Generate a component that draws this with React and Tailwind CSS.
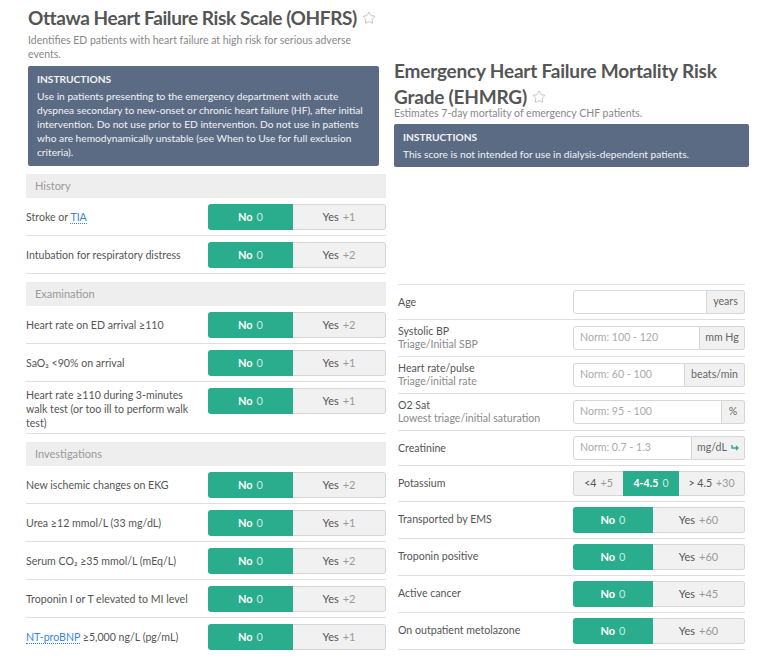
import React from "react";
import { Star } from "lucide-react";

const font = { fontFamily: "Lato, 'Noto Sans', sans-serif" };

function Toggle({ yes, w = "w-[178px]", noW = "w-[85px]", h = "h-[26px]" }) {
  return (
    <div className={`flex ${w} ${h} shrink-0 text-[11px]`}>
      <div className={`${noW} flex items-center justify-center gap-1 rounded-l-[3px] bg-[#29ad8c] text-white`}>
        <span className="font-bold">No</span>
        <span className="text-[#c8ece2]">0</span>
      </div>
      <div className="flex flex-1 items-center justify-center gap-1 rounded-r-[3px] border border-l-0 border-[#d6d6d6] bg-[#f1f1f1]">
        <span className="text-[#555]">Yes</span>
        <span className="text-[#999]">{yes}</span>
      </div>
    </div>
  );
}

function Section({ title }) {
  return (
    <div className="mt-2 flex h-6 items-center bg-[#eeeeee] px-[9px] text-[11px] text-[#9a9a9a]">
      {title}
    </div>
  );
}

function Row({ children, yes, top, last }) {
  let pad = "border-b border-[#dedede] pb-[5px]";
  if (last) pad = "pb-[4px]";
  if (top) pad = "border-b border-[#dedede] pb-[3px]";
  return (
    <div className={`flex justify-between pt-[6px] ${pad} ${top ? "items-start" : "items-center"}`}>
      <div className={`w-[174px] text-[10.6px] text-[#555] ${top ? "leading-[14px]" : "leading-[14.5px]"}`}>
        {children}
      </div>
      <Toggle yes={yes} />
    </div>
  );
}

function Abbr({ children }) {
  return (
    <span className="border-b border-dotted border-[#3a87d9] text-[#3a87d9]">{children}</span>
  );
}

function InputRow({ label, sub, placeholder, unit, unitW, icon }) {
  return (
    <div className="flex items-center justify-between border-b border-[#dedede] py-[5px]">
      <div className="text-[10.6px] leading-[13px] text-[#555]">
        <div>{label}</div>
        {sub && <div className="text-[#8a8a8a]">{sub}</div>}
      </div>
      <div className="flex h-6 w-[172px] text-[10.6px]">
        <div className="flex flex-1 items-center rounded-l-[3px] border border-[#d6d6d6] bg-white px-[6px] text-[#aaa]">
          {placeholder}
        </div>
        <div
          className={`${unitW} flex items-center justify-center gap-1 rounded-r-[3px] border border-l-0 border-[#d6d6d6] bg-[#f1f1f1] text-[#666]`}
        >
          {unit}
          {icon && (
            <svg width="8" height="8" viewBox="0 0 8 8" fill="none" stroke="#29ad8c" strokeWidth="1.4">
              <path d="M1 1v3h6M5 2l2 2-2 2" />
            </svg>
          )}
        </div>
      </div>
    </div>
  );
}

function ToggleRow({ label, yes }) {
  return (
    <div className="flex items-center justify-between border-b border-[#dedede] py-[5px]">
      <div className="text-[10.6px] text-[#555]">{label}</div>
      <Toggle yes={yes} w="w-[172px]" noW="w-[80px]" />
    </div>
  );
}

export default function App() {
  return (
    <div className="flex min-h-[670px] gap-2 bg-white pl-[26px]" style={font}>
      {/* OHFRS */}
      <div className="w-[360px] pb-1">
        <div className="px-[2px] pt-[5px]">
          <h1 className="flex items-center gap-[5px] whitespace-nowrap text-[19px] font-bold leading-[26px] tracking-[-0.4px] text-[#555]">
            Ottawa Heart Failure Risk Scale (OHFRS)
            <Star size={14} strokeWidth={1.2} className="text-[#aaa]" />
          </h1>
          <p className="mt-[2px] w-[340px] text-[10.5px] leading-[14px] text-[#888]">
            Identifies ED patients with heart failure at high risk for serious adverse events.
          </p>
          <div className="mt-[5px] w-[351px] rounded-[2px] bg-[#5b6b83] px-[9px] pb-[7px] pt-[6px] text-[10.2px] leading-[14px] text-[#f1f3f6]">
            <div className="font-bold">INSTRUCTIONS</div>
            <div className="mt-[3px]">
              Use in patients presenting to the emergency department with acute dyspnea secondary to
              new-onset or chronic heart failure (HF), after initial intervention. Do not use prior to
              ED intervention. Do not use in patients who are hemodynamically unstable (see When to Use
              for full exclusion criteria).
            </div>
          </div>
        </div>

        <Section title="History" />
        <Row yes="+1">
          Stroke or <Abbr>TIA</Abbr>
        </Row>
        <Row yes="+2">Intubation for respiratory distress</Row>

        <Section title="Examination" />
        <Row yes="+2">Heart rate on ED arrival ≥110</Row>
        <Row yes="+1">SaO₂ &lt;90% on arrival</Row>
        <Row yes="+1" top>
          Heart rate ≥110 during 3-minutes walk test (or too ill to perform walk test)
        </Row>

        <Section title="Investigations" />
        <Row yes="+2">New ischemic changes on EKG</Row>
        <Row yes="+1">Urea ≥12 mmol/L (33 mg/dL)</Row>
        <Row yes="+2">Serum CO₂ ≥35 mmol/L (mEq/L)</Row>
        <Row yes="+2">Troponin I or T elevated to MI level</Row>
        <Row yes="+1" last>
          <Abbr>NT-proBNP</Abbr> ≥5,000 ng/L (pg/mL)
        </Row>
      </div>

      {/* EHMRG */}
      <div className="w-[356px] pt-[58px]">
        <h1 className="text-[19px] font-bold leading-[26px] tracking-[-0.2px] text-[#555]">
          Emergency Heart Failure Mortality Risk{" "}
          <span className="inline-flex items-center gap-[5px]">
            Grade (EHMRG)
            <Star size={14} strokeWidth={1.2} className="text-[#aaa]" />
          </span>
        </h1>
        <p className="-mt-[4px] text-[10.5px] leading-[14px] text-[#888]">
          Estimates 7-day mortality of emergency CHF patients.
        </p>
        <div className="mt-[4px] w-[355px] rounded-[2px] bg-[#5b6b83] px-[9px] pb-[6px] pt-[6px] text-[10.2px] leading-[14px] text-[#f1f3f6]">
          <div className="font-bold">INSTRUCTIONS</div>
          <div className="mt-[3px]">This score is not intended for use in dialysis-dependent patients.</div>
        </div>

        <div className="ml-1 mt-[117px] w-[347px] border-t border-[#dedede]">
          <InputRow label="Age" placeholder="" unit="years" unitW="w-[38px]" />
          <InputRow
            label="Systolic BP"
            sub="Triage/Initial SBP"
            placeholder="Norm: 100 - 120"
            unit="mm Hg"
            unitW="w-[45px]"
          />
          <InputRow
            label="Heart rate/pulse"
            sub="Triage/initial rate"
            placeholder="Norm: 60 - 100"
            unit="beats/min"
            unitW="w-[60px]"
          />
          <InputRow
            label="O2 Sat"
            sub="Lowest triage/initial saturation"
            placeholder="Norm: 95 - 100"
            unit="%"
            unitW="w-[23px]"
          />
          <InputRow label="Creatinine" placeholder="Norm: 0.7 - 1.3" unit="mg/dL" unitW="w-[53px]" icon />

          <div className="flex items-center justify-between border-b border-[#dedede] py-[5px]">
            <div className="text-[10.6px] text-[#555]">Potassium</div>
            <div className="flex h-[25px] w-[172px] text-[10.6px]">
              <div className="flex w-[50px] items-center justify-center gap-1 rounded-l-[3px] border border-r-0 border-[#d6d6d6] bg-[#f1f1f1]">
                <span className="text-[#555]">&lt;4</span>
                <span className="text-[#999]">+5</span>
              </div>
              <div className="flex w-[56px] items-center justify-center gap-1 bg-[#29ad8c] text-white">
                <span className="font-bold">4-4.5</span>
                <span className="text-[#c8ece2]">0</span>
              </div>
              <div className="flex flex-1 items-center justify-center gap-1 rounded-r-[3px] border border-l-0 border-[#d6d6d6] bg-[#f1f1f1]">
                <span className="text-[#555]">&gt; 4.5</span>
                <span className="text-[#999]">+30</span>
              </div>
            </div>
          </div>

          <ToggleRow label="Transported by EMS" yes="+60" />
          <ToggleRow label="Troponin positive" yes="+60" />
          <ToggleRow label="Active cancer" yes="+45" />
          <ToggleRow label="On outpatient metolazone" yes="+60" />
        </div>
      </div>
    </div>
  );
}
